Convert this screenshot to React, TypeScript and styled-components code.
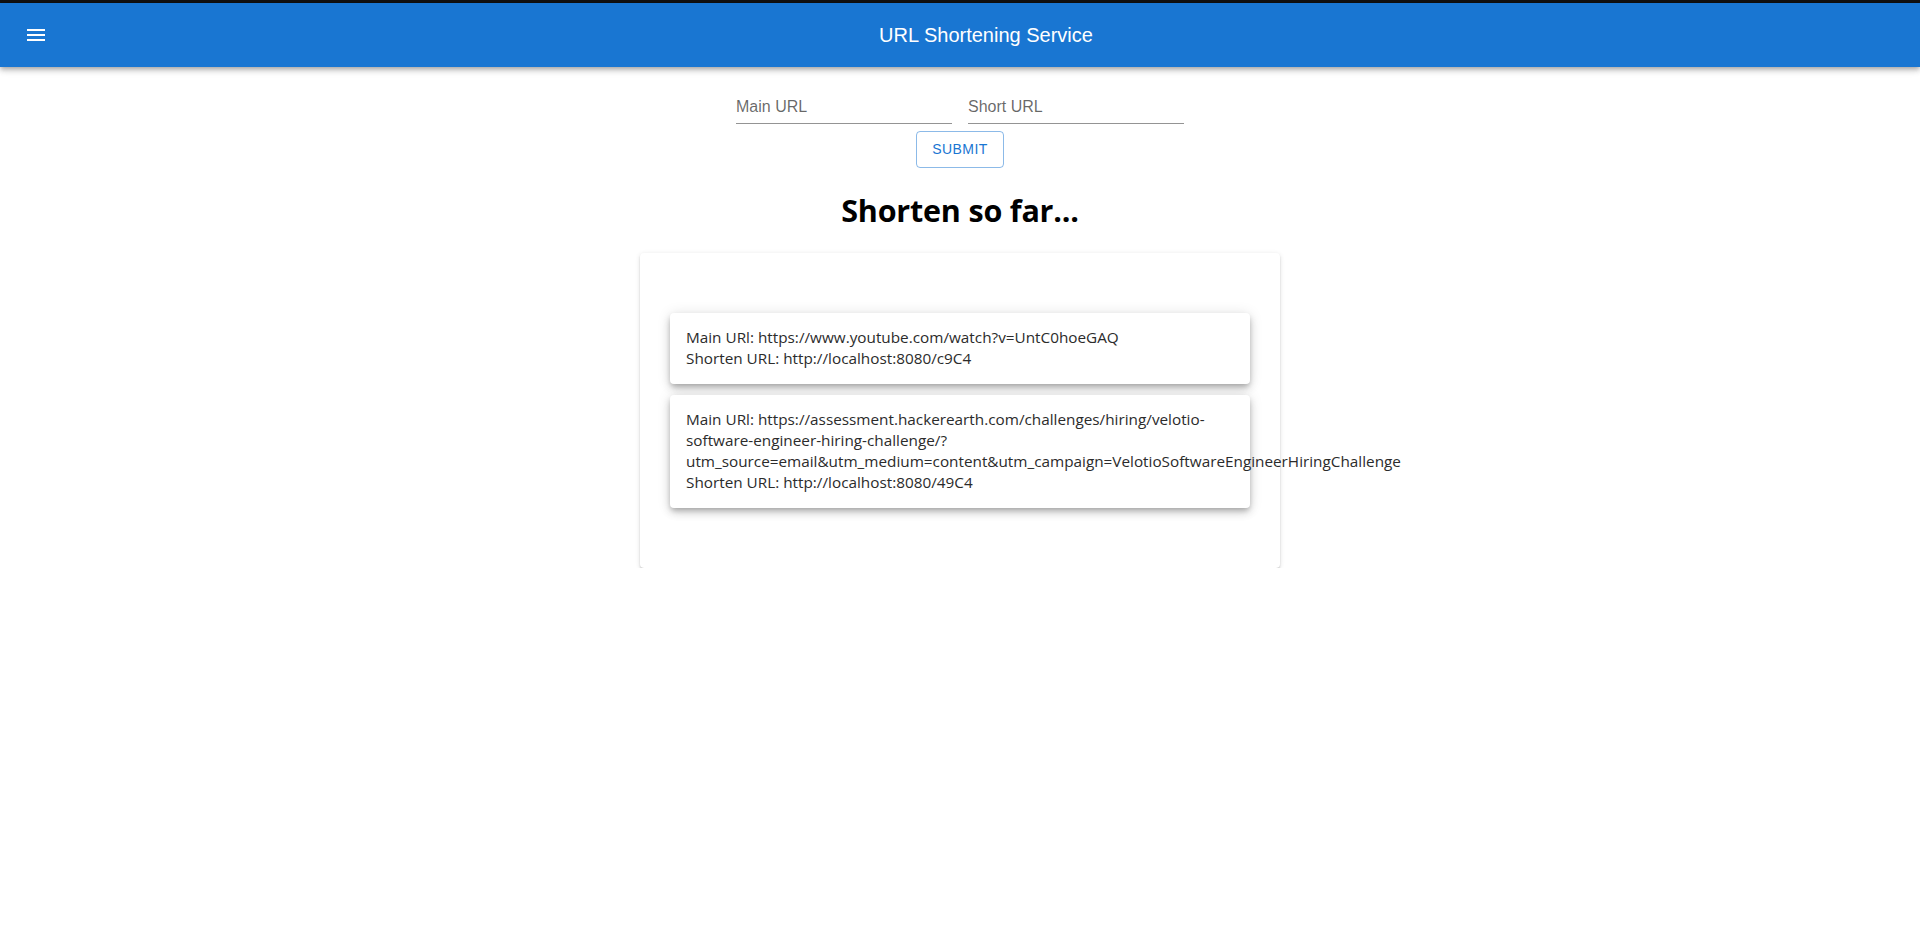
import styled, { createGlobalStyle } from 'styled-components';

const GlobalStyle = createGlobalStyle`
  html, body {
    margin: 0;
    padding: 0;
    background: #ffffff;
  }
  body {
    font-family: 'Open Sans', 'Noto Sans', sans-serif;
    -webkit-font-smoothing: antialiased;
  }
  * {
    box-sizing: border-box;
  }
`;

const TopEdge = styled.div`
  height: 3px;
  background-color: #111;
`;

const AppBar = styled.header`
  height: 64px;
  display: flex;
  align-items: center;
  padding: 0 24px;
  background-color: #1976d2;
  color: #ffffff;
  box-shadow: 0px 2px 4px -1px rgba(0, 0, 0, 0.2),
    0px 4px 5px 0px rgba(0, 0, 0, 0.14), 0px 1px 10px 0px rgba(0, 0, 0, 0.12);
  position: relative;
  z-index: 1;
`;

const MenuButton = styled.button`
  width: 48px;
  height: 48px;
  padding: 12px;
  margin: 0 16px 0 -12px;
  border: 0;
  border-radius: 50%;
  background: transparent;
  color: inherit;
  display: flex;
  align-items: center;
  justify-content: center;
  cursor: pointer;
`;

const Title = styled.h6`
  flex: 1;
  margin: 0;
  text-align: center;
  font-family: 'Liberation Sans', Arial, sans-serif;
  font-size: 20px;
  font-weight: 400;
  line-height: 1.6;
`;

const Main = styled.main`
  display: flex;
  flex-direction: column;
  align-items: center;
`;

const FieldRow = styled.div`
  display: flex;
  gap: 16px;
  margin-top: 24px;
`;

const Field = styled.input`
  width: 216px;
  height: 33px;
  padding: 4px 0 5px;
  border: 0;
  border-bottom: 1px solid rgba(0, 0, 0, 0.42);
  outline: none;
  background: transparent;
  font-family: 'Liberation Sans', Arial, sans-serif;
  font-size: 16px;
  color: rgba(0, 0, 0, 0.87);

  &::placeholder {
    color: rgba(0, 0, 0, 0.6);
    opacity: 1;
  }
`;

const SubmitButton = styled.button`
  margin-top: 7px;
  height: 36.5px;
  padding: 5px 15px;
  border: 1px solid rgba(25, 118, 210, 0.5);
  border-radius: 4px;
  background: transparent;
  color: #1976d2;
  font-family: 'Liberation Sans', Arial, sans-serif;
  font-size: 14px;
  font-weight: 400;
  letter-spacing: 0.02857em;
  text-transform: uppercase;
  line-height: 1.75;
  cursor: pointer;
`;

const Heading = styled.h1`
  margin: 21.44px 0;
  font-size: 30.5px;
  font-weight: 700;
  letter-spacing: -0.2px;
  line-height: 42.56px;
  color: #000;
`;

const Paper = styled.section`
  width: 640px;
  padding: 60px 30px;
  background: #ffffff;
  border-radius: 4px;
  box-shadow: 0px 3px 1px -2px rgba(0, 0, 0, 0.2),
    0px 2px 2px 0px rgba(0, 0, 0, 0.14), 0px 1px 5px 0px rgba(0, 0, 0, 0.12);
  display: flex;
  flex-direction: column;
  gap: 11px;
`;

const UrlCard = styled.div`
  padding: 14px 16px;
  background: #ffffff;
  border-radius: 4px;
  box-shadow: 0px 3px 5px -1px rgba(0, 0, 0, 0.2),
    0px 5px 8px 0px rgba(0, 0, 0, 0.14), 0px 1px 14px 0px rgba(0, 0, 0, 0.12);
`;

const Line = styled.div`
  font-size: 15.3px;
  line-height: 21.3px;
  color: #2b2b2b;
`;

const MenuIcon = () => (
  <svg width="24" height="24" viewBox="0 0 24 24" fill="currentColor">
    <path d="M3 18h18v-2H3v2zm0-5h18v-2H3v2zm0-7v2h18V6H3z" />
  </svg>
);

const links = [
  {
    main: 'https://www.youtube.com/watch?v=UntC0hoeGAQ',
    short: 'http://localhost:8080/c9C4',
  },
  {
    main: 'https://assessment.hackerearth.com/challenges/hiring/velotio-software-engineer-hiring-challenge/?utm_source=email&utm_medium=content&utm_campaign=VelotioSoftwareEngineerHiringChallenge',
    short: 'http://localhost:8080/49C4',
  },
];

export default function App() {
  return (
    <>
      <GlobalStyle />
      <TopEdge />
      <AppBar>
        <MenuButton aria-label="menu">
          <MenuIcon />
        </MenuButton>
        <Title>URL Shortening Service</Title>
      </AppBar>
      <Main>
        <FieldRow>
          <Field placeholder="Main URL" />
          <Field placeholder="Short URL" />
        </FieldRow>
        <SubmitButton>Submit</SubmitButton>
        <Heading>Shorten so far...</Heading>
        <Paper>
          {links.map((link, index) => (
            <UrlCard key={index}>
              <Line>Main URl: {link.main}</Line>
              <Line>Shorten URL: {link.short}</Line>
            </UrlCard>
          ))}
        </Paper>
      </Main>
    </>
  );
}
